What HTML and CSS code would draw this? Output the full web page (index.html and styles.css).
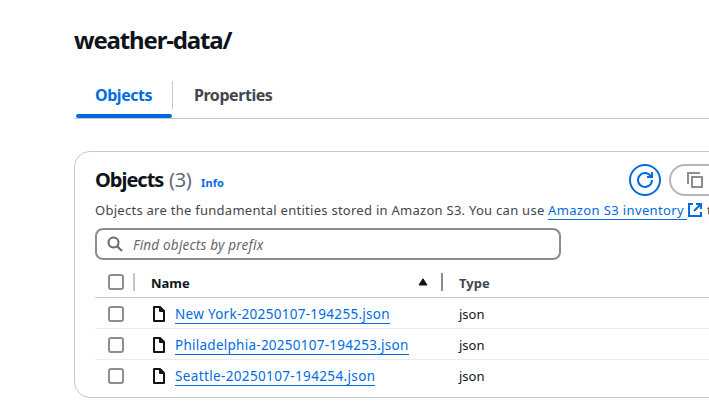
FILE: index.html
```html
<!DOCTYPE html>
<html lang="en">
<head>
<meta charset="utf-8">
<title>weather-data/</title>
<link rel="stylesheet" href="styles.css">
</head>
<body>
<svg class="defs" width="0" height="0">
  <symbol id="file" viewBox="0 0 12 16"><path d="M1 1h6l4 4v10H1z M7 1v4h4" fill="none" stroke="currentColor" stroke-width="2" stroke-linejoin="round"/></symbol>
</svg>
<main class="page">
  <h1 class="title"><span>weather-data/</span></h1>
  <nav class="tabs">
    <a class="tab active"><span>Objects</span></a>
    <a class="tab"><span>Properties</span></a>
  </nav>
  <section class="card">
    <header class="card-head">
      <h2 class="heading">Objects</h2>
      <span class="count">(3)</span>
      <a class="info">Info</a>
      <div class="actions">
        <button class="btn round" aria-label="Refresh"><svg width="16" height="16" viewBox="0 0 16 16" fill="none" stroke="currentColor" stroke-width="2"><path d="M10 5h5V0M15 8a7 7 0 1 1-1.3-4.1L15 5"/></svg></button>
        <button class="btn copy" aria-label="Copy"><svg width="16" height="16" viewBox="0 0 16 16" fill="none" stroke="currentColor" stroke-width="2"><path d="M1 12V1h12M5 5h10v10H5z"/></svg></button>
      </div>
    </header>
    <p class="desc"><span class="desc-text">Objects are the fundamental entities stored in Amazon S3. You can use</span><a class="link inventory">Amazon S3 inventory</a><svg class="ext" width="14" height="14" viewBox="0 0 14 14" fill="none" stroke="currentColor" stroke-width="2"><path d="M5 1H1v12h12V9M8 1h5v5M13 1L6 8"/></svg><span>t</span></p>
    <div class="search"><svg width="16" height="16" viewBox="0 0 16 16" fill="none" stroke="currentColor" stroke-width="2"><circle cx="6.5" cy="6.5" r="5"/><path d="M10.2 10.2L15 15"/></svg><span>Find objects by prefix</span></div>
    <div class="table">
      <div class="row head"><i class="box"></i><i class="sep"></i><b class="name">Name</b><svg class="sort" width="10" height="8" viewBox="0 0 10 8"><path d="M5 .8L9 7H1z" fill="currentColor" stroke="currentColor" stroke-linejoin="round"/></svg><i class="sep dark"></i><b class="type">Type</b></div>
      <div class="row"><i class="box"></i><svg class="file"><use href="#file"/></svg><div class="cell"><a class="link f1">New York-20250107-194255.json</a></div><span class="type">json</span></div>
      <div class="row"><i class="box"></i><svg class="file"><use href="#file"/></svg><div class="cell"><a class="link f2">Philadelphia-20250107-194253.json</a></div><span class="type">json</span></div>
      <div class="row"><i class="box"></i><svg class="file"><use href="#file"/></svg><div class="cell"><a class="link f3">Seattle-20250107-194254.json</a></div><span class="type">json</span></div>
    </div>
  </section>
</main>
</body>
</html>
```
FILE: styles.css
```css
* { box-sizing: border-box; }
body { margin: 0; background: #fff; color: #0f141a; font: 13px/20px "Noto Sans", "Open Sans", sans-serif; overflow: hidden; }
.defs { display: block; height: 0; }
.page { width: 100%; padding: 25px 0 0 74px; overflow: hidden; }
.title { margin: 0; font-size: 24px; line-height: 30px; font-weight: 700; letter-spacing: -1.15px; }
.tabs { display: flex; height: 47px; margin-top: 17px; border-bottom: 1px solid #c6c6cd; }
.tab { position: relative; display: flex; align-items: center; height: 46px; padding: 0 21px; font-size: 16px; font-weight: 700; letter-spacing: -.45px; color: #424650; }
.tab.active { width: 99px; color: #006ce0; }
.tab.active::before { content: ""; position: absolute; right: 0; top: 9px; height: 28px; width: 1px; background: #c6c6cd; }
.tab.active::after { content: ""; position: absolute; left: 2px; right: 1px; bottom: 0; height: 4px; border-radius: 2px; background: #006ce0; }
.card { width: 960px; height: 247px; margin-top: 32px; padding: 12px 20px 0; border: 1px solid #c6c6cd; border-radius: 16px; }
.card-head { display: flex; height: 32px; align-items: center; }
.heading { width: 74px; margin: 0; font-size: 20px; line-height: 24px; letter-spacing: -1px; }
.count { width: 32px; font-size: 20px; line-height: 24px; color: #656871; letter-spacing: -.3px; }
.info { width: 428px; padding-top: 6px; font-size: 11px; line-height: 16px; font-weight: 700; letter-spacing: .1px; color: #006ce0; }
.actions { display: flex; gap: 8px; }
.btn { display: flex; flex: none; align-items: center; height: 32px; padding: 0 0 0 16px; border: 2px solid #b4b4bb; border-radius: 16px; background: #fff; color: #8c8c94; }
.btn.round { width: 32px; padding: 0; justify-content: center; border-color: #006ce0; color: #006ce0; }
.copy { width: 160px; }
.desc { display: flex; align-items: center; height: 20px; margin: 4px 0 0; letter-spacing: .27px; color: #424650; white-space: nowrap; }
.desc-text { width: 453px; }
.link { color: #006ce0; border-bottom: 1px solid #006ce0; line-height: 18px; white-space: nowrap; }
.inventory { width: 139px; letter-spacing: .37px; }
.ext { margin: 0 5px 0 1px; color: #006ce0; }
.search { display: flex; align-items: center; width: 466px; height: 32px; margin-top: 8px; padding-left: 10px; gap: 10px; border: 2px solid #8c8c94; border-radius: 8px; color: #656871; font-size: 13.5px; font-style: italic; letter-spacing: .2px; }
.search span { padding-top: 1px; }
.table { margin-top: 6px; }
.row { display: flex; align-items: center; height: 31px; padding: 2px 0 0 13px; border-bottom: 1px solid #ebebf0; }
.row:last-child { border: 0; padding-top: 1px; }
.row.head { height: 32px; padding-top: 0; border-color: #c6c6cd; }
.box { flex: none; width: 16px; height: 16px; border: 2px solid #8c8c94; border-radius: 3px; }
.sep { width: 2px; height: 18px; margin-left: 9px; background: #c6c6cd; }
.dark { margin-left: 13px; background: #8c8c94; }
.name { width: 267px; margin-left: 16px; }
.head b { padding-top: 2px; }
.head .sort { margin-top: 1px; }
.head .type { margin-left: 16px; color: #424650; }
.file { width: 12px; height: 16px; margin-left: 29px; }
.cell { width: 284px; margin-left: 10px; display: flex; font-size: 13.5px; }
.f1 { letter-spacing: .29px; }
.f2 { letter-spacing: .26px; }
.f3 { letter-spacing: .36px; }
```
